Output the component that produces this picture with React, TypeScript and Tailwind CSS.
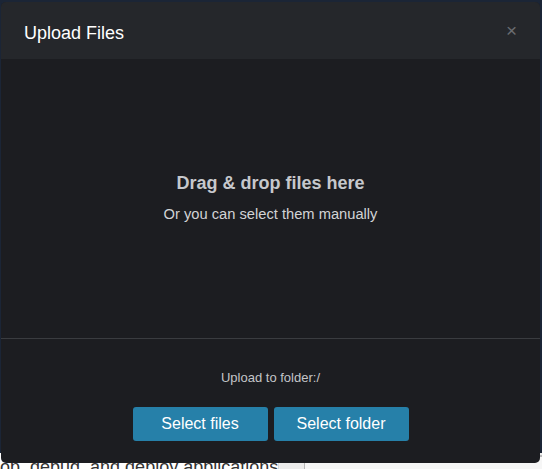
export default function App() {
  return (
    <div className="relative w-[542px] h-[469px] overflow-hidden bg-[#1b2536] font-['Liberation_Sans',Arial,sans-serif]">
      {/* page behind the dialog */}
      <div className="flex flex-col h-full">
        <div className="flex-1" />
        <div className="flex h-[16px] bg-[#f4f4f4]">
          <div className="w-[279px] bg-white border-r border-[#d8d8d8] text-[18px] leading-[18px] text-[#333] pt-[5px] overflow-hidden whitespace-nowrap">
            op, debug, and deploy applications
          </div>
          <div className="flex-1 bg-[#ececec] pl-[25px] pt-[2px]">
            <div className="h-full border-t-2 border-l border-[#b8b8b8] bg-[#f6f6f6]" />
          </div>
        </div>
      </div>

      {/* dialog */}
      <div className="absolute left-[1px] top-[2px] w-[539px] h-[461px] rounded-[5px] overflow-hidden bg-[#1c1d21] flex flex-col">
        <div className="h-[57px] bg-[#25272b] flex items-center justify-between pl-[23px] pr-[23px] pt-[5px] shrink-0">
          <span className="text-[18px] text-white">Upload Files</span>
          <span className="text-[19px] leading-none text-[#6a6c70] pb-[6px]">×</span>
        </div>
        <div className="h-[279px] flex flex-col items-center justify-center text-center pb-[2px]">
          <div className="text-[18px] font-bold text-[#c6c8cc]">Drag &amp; drop files here</div>
          <div className="text-[14.7px] text-[#d2d3d5] mt-[6px]">Or you can select them manually</div>
        </div>
        <div className="border-t border-[#3a3c40] flex-1 flex flex-col items-center pt-[29px]">
          <div className="text-[13px] text-[#c4c5c8]">Upload to folder:/</div>
          <div className="flex gap-[6px] mt-[19px]">
            <button className="w-[135px] h-[34px] rounded-[3px] bg-[#2680a9] text-white text-[16px]">Select files</button>
            <button className="w-[135px] h-[34px] rounded-[3px] bg-[#2680a9] text-white text-[16px]">Select folder</button>
          </div>
        </div>
      </div>
    </div>
  );
}
